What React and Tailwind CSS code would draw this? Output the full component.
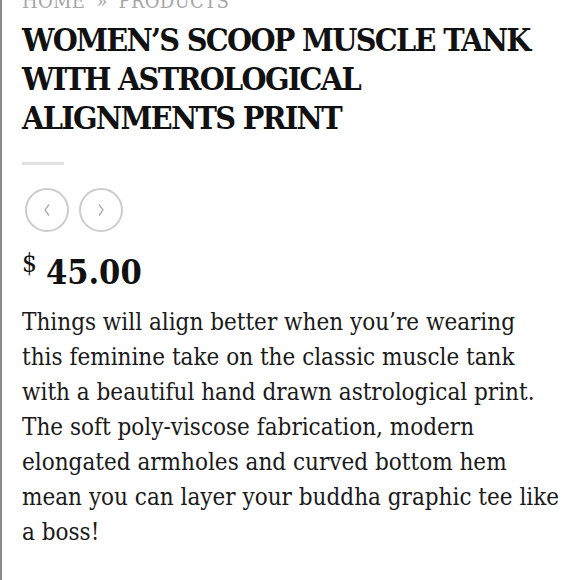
export default function App() {
  const serif = { fontFamily: '"DejaVu Serif Condensed", "DejaVu Serif", serif' };
  return (
    <div className="w-[580px] h-[580px] overflow-hidden bg-white border-l-2 border-[#8a8a8a]" style={serif}>
      <div className="px-[20px] mt-[-12px]">
        <div className="text-[20px] leading-[26px] text-[#a6a6a6] tracking-[0.3px] uppercase whitespace-nowrap">
          Home <span className="mx-[5px]">»</span> Products
        </div>
        <h1 className="mt-[7px] text-[32px] leading-[39px] font-bold text-[#111] uppercase tracking-[-1.7px] whitespace-nowrap">
          Women’s Scoop Muscle Tank<br />with Astrological<br />Alignments Print
        </h1>
        <div className="mt-[24px] w-[42px] h-[3px] bg-[#e0e0e0]" />
        <div className="mt-[23px] flex gap-[10px] pl-[3px]">
          <button className="w-[44px] h-[44px] rounded-full border-2 border-[#cccccc] flex items-center justify-center">
            <svg width="10" height="14" viewBox="0 0 10 14" fill="none" stroke="#aaaaaa" strokeWidth="1.3">
              <path d="M7 1.5 L3 7 L7 12.5" />
            </svg>
          </button>
          <button className="w-[44px] h-[44px] rounded-full border-2 border-[#cccccc] flex items-center justify-center">
            <svg width="10" height="14" viewBox="0 0 10 14" fill="none" stroke="#aaaaaa" strokeWidth="1.3">
              <path d="M3 1.5 L7 7 L3 12.5" />
            </svg>
          </button>
        </div>
        <div className="mt-[20px] flex items-start text-[#111]">
          <span className="text-[26px] leading-[26px] mt-[-2px]">$</span>
          <span className="ml-[9px] text-[34px] leading-[40px] font-bold">45.00</span>
        </div>
        <p className="mt-[13px] text-[24px] leading-[35px] text-[#1a1a1a]">
          Things will align better when you’re wearing this feminine take on the classic muscle tank with a beautiful hand drawn astrological print. The soft poly-viscose fabrication, modern elongated armholes and curved bottom hem mean you can layer your buddha graphic tee like a boss!
        </p>
      </div>
    </div>
  );
}
